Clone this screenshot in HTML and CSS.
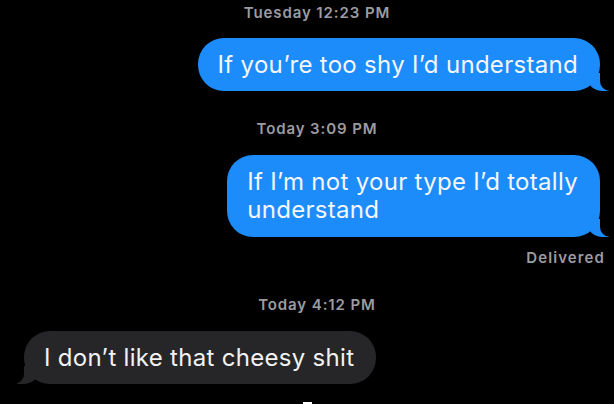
FILE: index.html
```html
<!DOCTYPE html>
<html lang="en">
  <head>
    <meta charset="UTF-8" />
    <meta name="viewport" content="width=device-width, initial-scale=1.0" />
    <link rel="stylesheet" href="styles.css">
    <title>Messages</title>
  </head>
  <body>
    <main class="thread">
      <p class="stamp first">Tuesday 12:23 PM</p>
      <div class="bubble sent">If you’re too shy I’d understand</div>

      <p class="stamp">Today 3:09 PM</p>
      <div class="bubble sent wide">If I’m not your type I’d totally<br>understand</div>
      <p class="status">Delivered</p>

      <p class="stamp">Today 4:12 PM</p>
      <div class="bubble received">I don’t like that cheesy shit</div>
    </main>
    <span class="home-mark"></span>
  </body>
</html>
```

FILE: styles.css
```css
* {
  padding: 0;
  margin: 0;
  box-sizing: border-box;
}

body {
  background-color: #000;
  font-family: Inter, "Liberation Sans", sans-serif;
  width: 614px;
  height: 404px;
  overflow: hidden;
  position: relative;
}

.thread {
  display: flex;
  flex-direction: column;
  padding: 4px 14px 0 20px;
}

.stamp {
  align-self: center;
  margin: 29px 0 17px 14px;
  color: #9c9ca0;
  font-size: 15px;
  font-weight: 600;
  letter-spacing: 0.9px;
  line-height: 18px;
}

.stamp.first {
  margin-top: 0;
  margin-bottom: 16px;
}

.bubble {
  position: relative;
  padding: 13px 22px 13px 20px;
  border-radius: 26px;
  font-size: 24px;
  letter-spacing: 0.3px;
  line-height: 27px;
  color: #f4f6fa;
}

.bubble.wide {
  line-height: 28px;
}

.sent {
  align-self: flex-end;
  background-color: #1c8cfb;
}

.received {
  align-self: flex-start;
  margin-left: 4px;
  background-color: #262628;
  color: #f2f2f2;
}

/* tails */
.bubble::before,
.bubble::after {
  content: "";
  position: absolute;
  bottom: 0;
  height: 18px;
}

.sent::before {
  right: -9px;
  width: 22px;
  background-color: #1c8cfb;
  border-bottom-left-radius: 16px 14px;
}

.sent::after {
  right: -26px;
  width: 26px;
  background-color: #000;
  border-bottom-left-radius: 10px;
}

.received::before {
  left: -7px;
  width: 22px;
  background-color: #262628;
  border-bottom-right-radius: 16px 14px;
}

.received::after {
  left: -26px;
  width: 26px;
  background-color: #000;
  border-bottom-right-radius: 10px;
}

.status {
  align-self: flex-end;
  margin: 12px -5px 0 0;
  color: #9c9ca0;
  font-size: 15px;
  font-weight: 600;
  letter-spacing: 1.1px;
  line-height: 18px;
}

.home-mark {
  position: absolute;
  left: 303px;
  bottom: 0;
  width: 9px;
  height: 2px;
  background-color: #fff;
}
```
